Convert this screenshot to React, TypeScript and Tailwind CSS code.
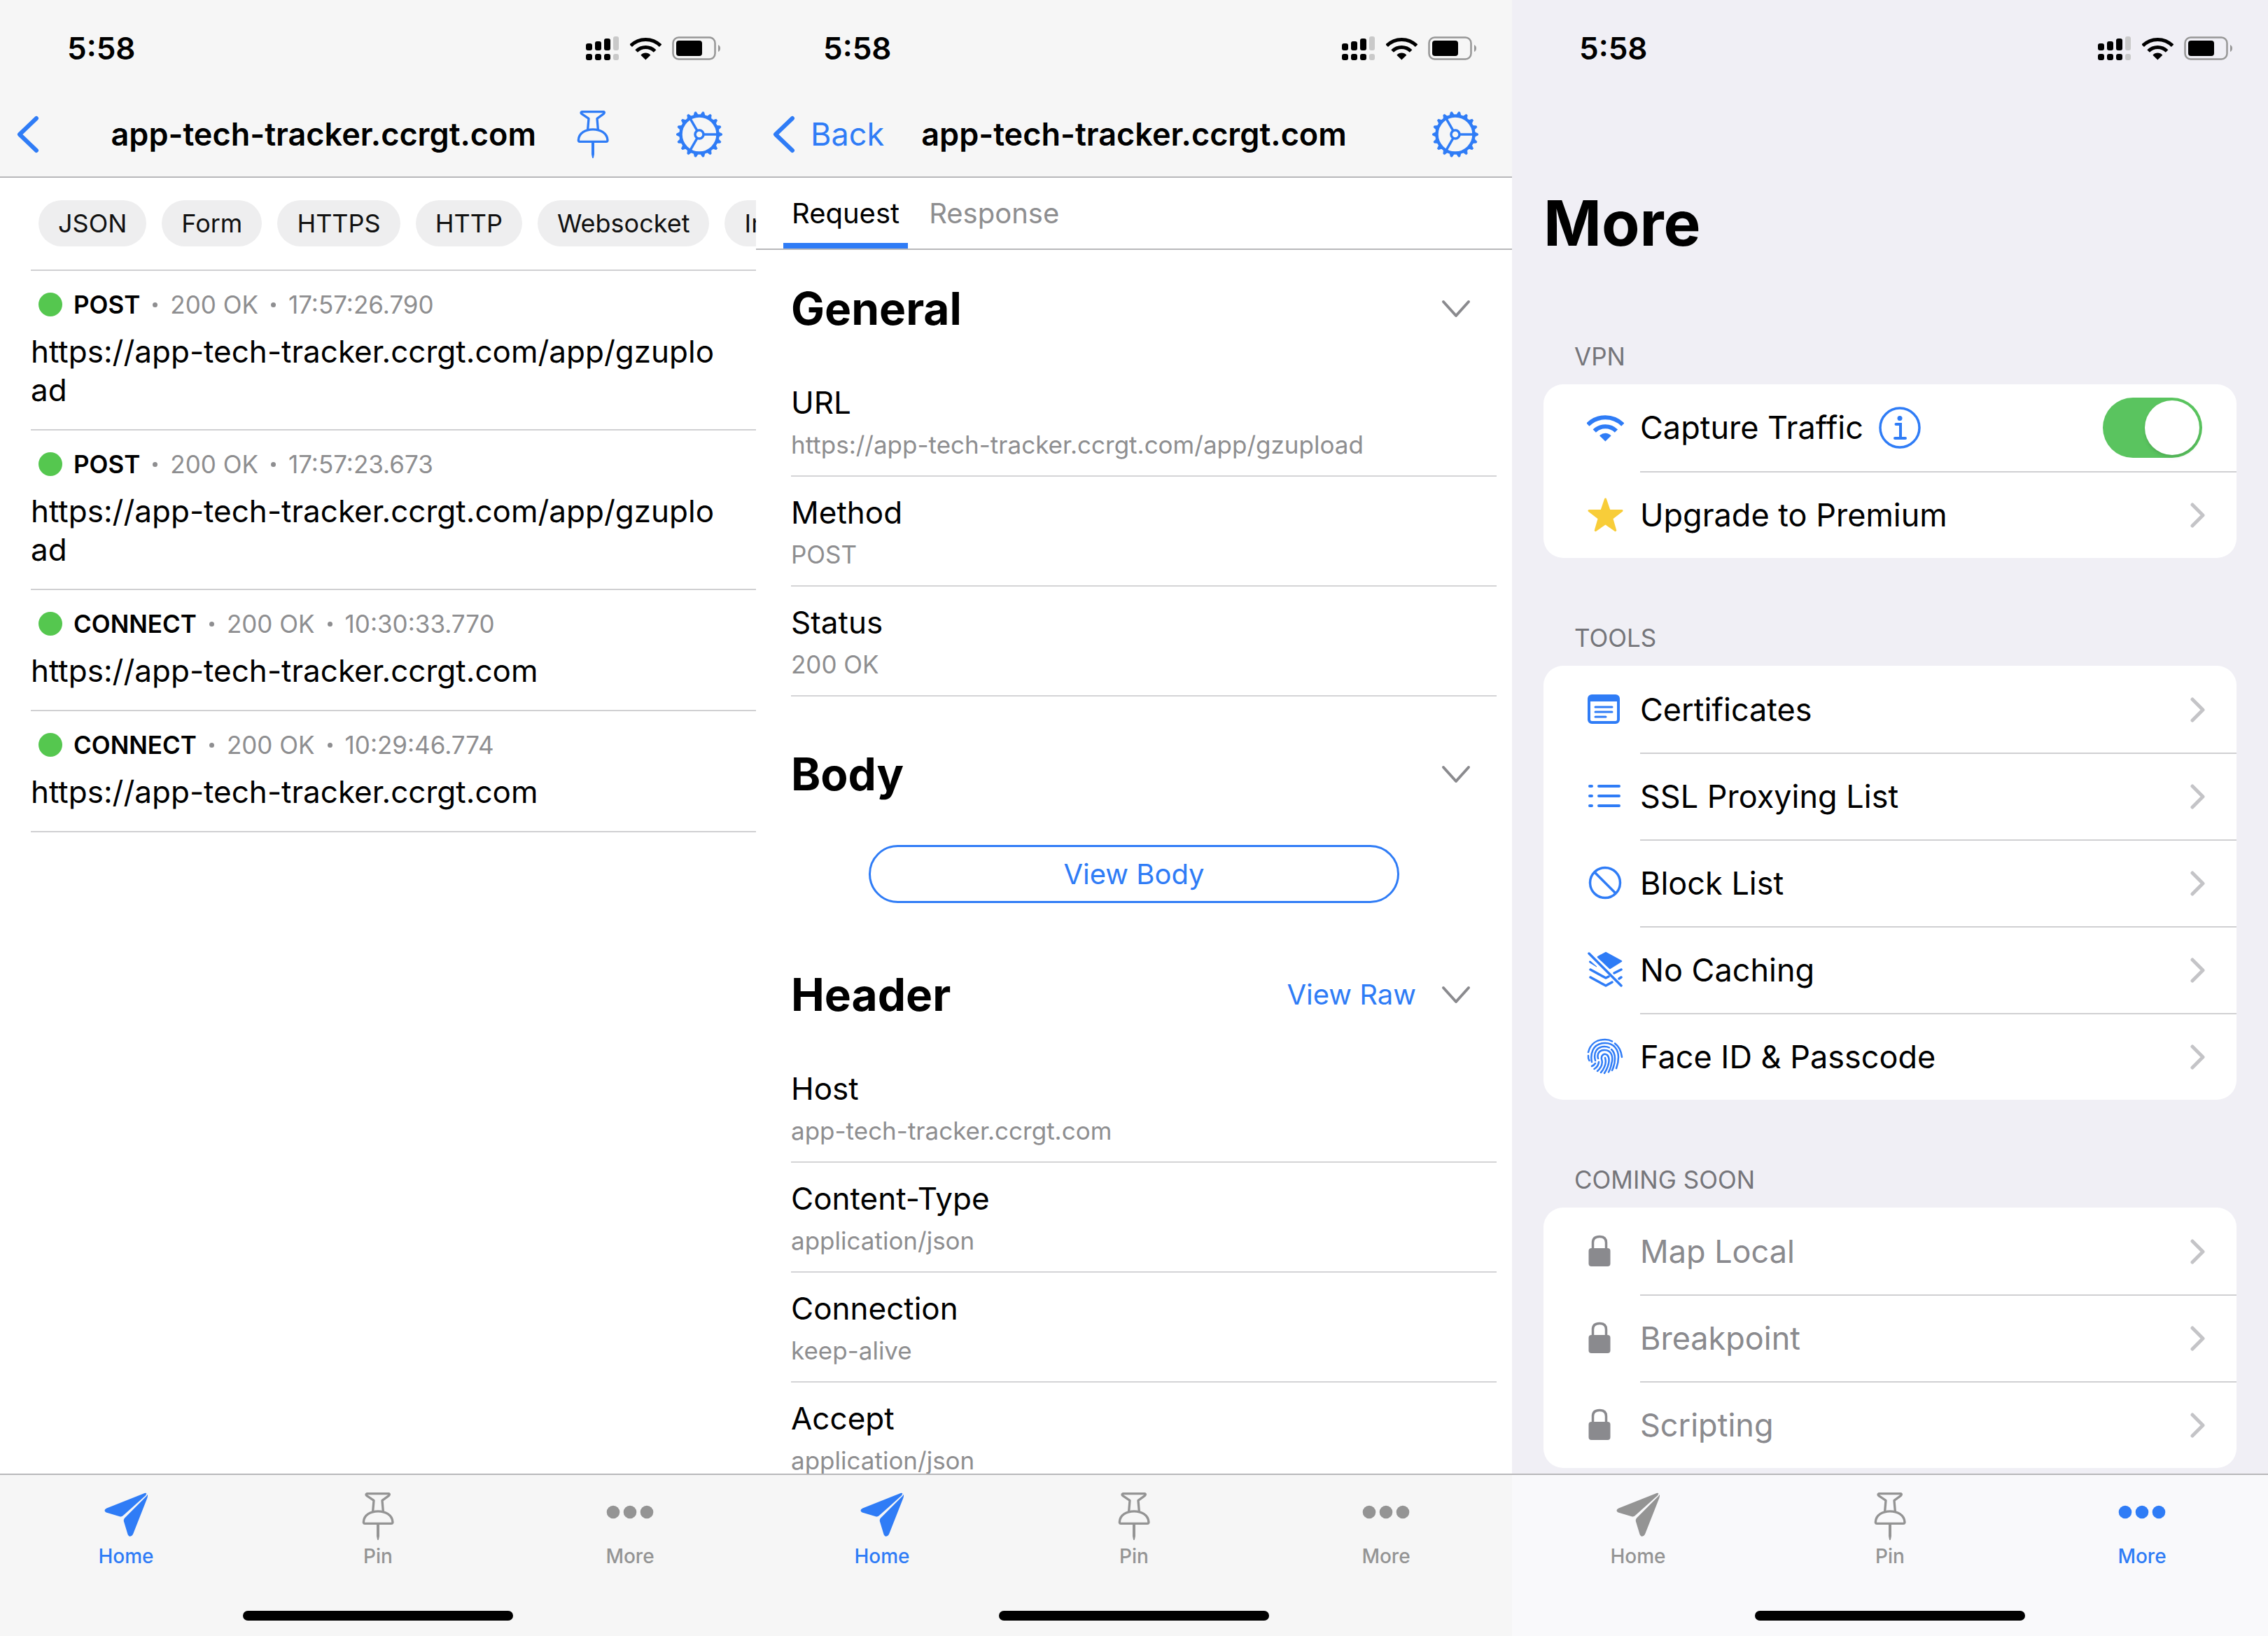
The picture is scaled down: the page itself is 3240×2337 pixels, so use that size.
import React from "react";

/* ---------- Icons ---------- */

const WifiShape = ({ className }: { className: string }) => (
  <svg viewBox="74 68 158 118" className={className} fill="none" stroke="currentColor" strokeWidth="18" aria-hidden="true">
    <path d="M78 114 A105 105 0 0 1 227 114" />
    <path d="M106 141 A66 66 0 0 1 199 141" />
    <path d="M128 161 A33 33 0 0 1 177 161 L152.500 185 Z" fill="currentColor" stroke="none" />
  </svg>
);

const Signal = () => (
  <svg viewBox="0 0 48 36" className="h-9 w-12" aria-hidden="true">
    <g fill="#000">
      <rect x="0" y="11" width="9" height="10" rx="3" />
      <rect x="13" y="8" width="9" height="13" rx="3" />
      <rect x="26" y="4" width="9" height="17" rx="3" />
      <rect x="0" y="26" width="9" height="9" rx="3" />
      <rect x="13" y="26" width="9" height="9" rx="3" />
      <rect x="26" y="26" width="9" height="9" rx="3" />
    </g>
    <g fill="#c9c9c9">
      <rect x="39" y="1" width="8" height="20" rx="3" />
      <rect x="39" y="26" width="8" height="9" rx="3" />
    </g>
  </svg>
);

const Battery = () => (
  <svg viewBox="0 0 70 34" className="h-[34px] w-[70px]" aria-hidden="true">
    <rect x="1.500" y="1.500" width="60" height="31" rx="8" fill="none" stroke="#979797" strokeWidth="2.500" />
    <rect x="6" y="6" width="37" height="22" rx="4" fill="#000" />
    <path d="M66 12 Q69 13.500 69 17 Q69 20.500 66 22 Z" fill="#979797" />
  </svg>
);

const BackChevron = () => (
  <svg viewBox="0 0 32 54" className="h-[54px] w-8" fill="none" stroke="currentColor" strokeWidth="6" strokeLinecap="round" strokeLinejoin="round" aria-hidden="true">
    <path d="M28 4 L4 27 L28 50" />
  </svg>
);

const Pushpin = ({ className }: { className: string }) => (
  <svg viewBox="72 380 136 210" className={className} fill="none" stroke="currentColor" strokeWidth="10" strokeLinejoin="round" strokeLinecap="round" aria-hidden="true">
    <path d="M92 388 H187 Q192 391 186 397 L158 417 L162 464 M92 388 Q86 391 92 397 L122 417 L118 464" />
    <path d="M78 510 C80 448 200 448 203 510 Q203 516 197 516 H84 Q78 516 78 510 Z" />
    <path d="M137 518 H143 L143 570 L140 584 L137 570 Z" fill="currentColor" strokeWidth="6" />
  </svg>
);

const TEETH = Array.from({ length: 18 }, (_, i) => i * 20);

const Gear = () => (
  <svg viewBox="-34 -34 68 68" className="size-[68px]" fill="none" stroke="currentColor" aria-hidden="true">
    <circle r="26.500" strokeWidth="4.500" />
    <circle r="6" strokeWidth="3.500" />
    {TEETH.map((a) => (
      <path key={a} d="M27 -3.500 L32.500 -1 V1 L27 3.500 Z" fill="currentColor" strokeWidth="0.800" transform={`rotate(${a})`} />
    ))}
    {[0, 120, 240].map((a) => (
      <path key={a} d="M7 0 H26" strokeWidth="3.500" transform={`rotate(${a})`} />
    ))}
  </svg>
);

const DownChevron = () => (
  <svg viewBox="0 0 42 26" className="h-[26px] w-[42px]" fill="none" stroke="#8a8a8e" strokeWidth="4" strokeLinecap="round" strokeLinejoin="round" aria-hidden="true">
    <path d="M3 3 L21 23 L39 3" />
  </svg>
);

const RightChevron = () => (
  <svg viewBox="0 0 22 36" className="h-9 w-[22px]" fill="none" stroke="#c4c4c7" strokeWidth="5" strokeLinecap="round" strokeLinejoin="round" aria-hidden="true">
    <path d="M3 3 L18 18 L3 33" />
  </svg>
);

const Plane = () => (
  <svg viewBox="82 68 188 188" className="size-[63px]" fill="currentColor" aria-hidden="true">
    <path d="M262 71 Q256 69 248 73 L92 135 Q76 144 90 153 L150 171 Q158 172 163 166 L259 80 Z" />
    <path d="M267 76 Q268 84 265 92 L206 242 Q201 255 192 255 Q184 254 181 243 L165 190 Q164 184 168 178 L263 82 Z" />
  </svg>
);

const Dots = () => (
  <svg viewBox="0 0 68 20" className="h-5 w-[68px]" fill="currentColor" aria-hidden="true">
    <circle cx="10" cy="10" r="9.300" />
    <circle cx="34" cy="10" r="9.300" />
    <circle cx="58" cy="10" r="9.300" />
  </svg>
);

const Star = () => (
  <svg viewBox="82 418 154 148" className="h-[49px] w-[51px]" fill="#f8cd39" stroke="#f8cd39" strokeWidth="9" strokeLinejoin="round" aria-hidden="true">
    <path d="M159 424 L176 474 H230 L187 507 L202 559 L159 529 L116 559 L131 507 L88 474 H142 Z" />
  </svg>
);

const Certificate = () => (
  <svg viewBox="0 0 50 42" className="h-[42px] w-[50px]" fill="none" stroke="currentColor" aria-hidden="true">
    <rect x="2" y="2" width="42" height="38" rx="4" strokeWidth="4" />
    <path d="M2 3 H44 V10 H2 Z" fill="currentColor" stroke="none" />
    <path d="M11 18 H35 M11 25 H35 M11 32 H26" strokeWidth="3" strokeLinecap="round" />
  </svg>
);

const Bullets = () => (
  <svg viewBox="0 0 50 34" className="h-[34px] w-[50px]" fill="none" stroke="currentColor" strokeWidth="4" strokeLinecap="round" aria-hidden="true">
    <path d="M3 3 H6 M16 3 H45 M3 17 H6 M16 17 H45 M3 31 H6 M16 31 H45" />
  </svg>
);

const Block = () => (
  <svg viewBox="0 0 48 48" className="size-12" fill="none" stroke="currentColor" strokeWidth="3.500" aria-hidden="true">
    <circle cx="24" cy="24" r="21.500" />
    <path d="M9 9 L39 39" />
  </svg>
);

const NoCache = () => (
  <svg viewBox="0 0 50 52" className="h-[52px] w-[50px]" fill="none" stroke="currentColor" strokeWidth="3.500" strokeLinejoin="round" strokeLinecap="round" aria-hidden="true">
    <path d="M15 8 L26 2 L48 14 L32 24 Z" fill="currentColor" strokeWidth="2.500" />
    <path d="M2 3 L48 49" />
    <path d="M3 14 L4 14 L13 22 L3 16 Z" fill="currentColor" strokeWidth="1" />
    <path d="M4 26 L26 38 L30 36" />
    <path d="M38 31 L48 26" />
    <path d="M4 37 L26 49 L35 44" />
    <path d="M45 39 L48 37" />
  </svg>
);

const Fingerprint = () => (
  <svg viewBox="0 0 52 52" className="size-[52px]" fill="none" stroke="currentColor" strokeWidth="2.500" strokeLinecap="round" aria-hidden="true">
    <path d="M2 20 C5 8 14 2 26 2 Q32 2 36 4.500" />
    <path d="M40 7.500 C46 12 49 18 50 27" />
    <path d="M2 25 Q1.500 29 3.500 32" />
    <path d="M7 34 C5 24 7 7 26 7 C39 7 45 17 45 27 Q45 35 42 43" />
    <path d="M12 32 C9 21 14 12 25 12 Q29 12 32 13.500" />
    <path d="M35 16 C42 22 41 36 36 46" />
    <path d="M7 40 Q10 39 12 36" />
    <path d="M16 29 C14 22 18 17 25 17 C36 17 38 28 35 37 Q34 43 31 48.500" />
    <path d="M10.500 44 Q16 41 17 34" />
    <path d="M15 47 Q24 39 21 30 C20 24 25 21 29 24 C34 29 31 41 25 50" />
    <path d="M26 28 Q28 35 25 41 Q23 46 20 49" />
  </svg>
);

const Lock = () => (
  <svg viewBox="0 0 32 46" className="h-[46px] w-8" aria-hidden="true">
    <path d="M6.500 22 V11 Q6.500 2.500 16 2.500 Q25.500 2.500 25.500 11 V22" fill="none" stroke="#8a8a8e" strokeWidth="3.500" />
    <rect x="0.500" y="19" width="31" height="26" rx="4" fill="#8a8a8e" />
  </svg>
);

const Info = () => (
  <svg viewBox="0 0 60 60" className="size-[60px]" fill="none" stroke="currentColor" aria-hidden="true">
    <circle cx="30" cy="30" r="28" strokeWidth="3.500" />
    <circle cx="30" cy="16.500" r="3.500" fill="currentColor" stroke="none" />
    <path d="M24.500 25 H31 V44 M23 45 H38" strokeWidth="4" strokeLinecap="round" />
  </svg>
);

/* ---------- Shared chrome ---------- */

const StatusBar = () => (
  <div className="flex h-[138px] shrink-0 items-center justify-between pr-[50px] pl-24">
    <span className="text-[44px] leading-[56px] font-semibold">5:58</span>
    <div className="flex items-center gap-[15px]">
      <Signal />
      <WifiShape className="h-[34px] w-[45px]" />
      <Battery />
    </div>
  </div>
);

type TabName = "Home" | "Pin" | "More";

const TabBar = ({ active, tone }: { active: TabName; tone: string }) => {
  const tabs: { name: TabName; icon: React.ReactNode }[] = [
    { name: "Home", icon: <Plane /> },
    { name: "Pin", icon: <Pushpin className="h-[70px] w-[46px]" /> },
    { name: "More", icon: <Dots /> },
  ];
  return (
    <nav className={`flex h-[232px] shrink-0 flex-col border-t-2 border-[#b8b8ba] ${tone}`}>
      <div className="grid grid-cols-3">
        {tabs.map((t) => (
          <button
            key={t.name}
            type="button"
            aria-current={t.name === active ? "page" : undefined}
            className={`flex flex-col items-center pt-5 text-[28px] leading-9 font-medium ${t.name === active ? "text-[#2f7cf6]" : "text-[#949494]"}`}
          >
            <span className="flex h-[78px] items-center">
              <span className={t.name === "More" ? "pb-3" : t.name === "Home" ? "pb-1.5" : ""}>{t.icon}</span>
            </span>
            {t.name}
          </button>
        ))}
      </div>
      <div className="mt-auto mb-[22px] h-3.5 w-[386px] self-center rounded-full bg-black" />
    </nav>
  );
};

/* ---------- Screen 1: request list ---------- */

const CHIPS = ["JSON", "Form", "HTTPS", "HTTP", "Websocket", "Image"];

const REQUESTS = [
  { method: "POST", time: "17:57:26.790", url: "https://app-tech-tracker.ccrgt.com/app/gzupload" },
  { method: "POST", time: "17:57:23.673", url: "https://app-tech-tracker.ccrgt.com/app/gzupload" },
  { method: "CONNECT", time: "10:30:33.770", url: "https://app-tech-tracker.ccrgt.com" },
  { method: "CONNECT", time: "10:29:46.774", url: "https://app-tech-tracker.ccrgt.com" },
];

const RequestList = () => (
  <section className="flex min-h-0 min-w-0 flex-col overflow-hidden bg-white">
    <header className="shrink-0 border-b-2 border-[#b8b8ba] bg-[#f6f6f6] pb-1.5">
      <StatusBar />
      <div className="flex h-[108px] items-center justify-between pr-[47px] pl-6">
        <button type="button" aria-label="Back" className="text-[#2f7cf6]">
          <BackChevron />
        </button>
        <h1 className="ml-auto text-[45px] leading-[54px] font-semibold">app-tech-tracker.ccrgt.com</h1>
        <button type="button" aria-label="Pin" className="ml-[58px] text-[#2f7cf6]">
          <Pushpin className="h-[70px] w-[46px]" />
        </button>
        <button type="button" aria-label="Settings" className="ml-[95px] text-[#2f7cf6]">
          <Gear />
        </button>
      </div>
    </header>
    <main className="min-h-0 flex-1 overflow-hidden">
      <div className="flex gap-[22px] overflow-hidden pt-8 pb-[33px] pl-[55px]">
        {CHIPS.map((c) => (
          <button key={c} type="button" className="h-[66px] shrink-0 rounded-full bg-[#eeeeef] px-7 text-[36px] leading-[66px] text-[#111]">
            {c}
          </button>
        ))}
      </div>
      <ul className="ml-11 border-b-2 border-[#d0d0d2]">
        {REQUESTS.map((r) => (
          <li key={r.time} className="border-t-2 border-[#d0d0d2] pt-6 pr-10 pb-7">
            <div className="flex items-center pl-[11px] text-[35px] leading-[48px] text-[#8e8e90]">
              <span className="mr-4 size-[34px] rounded-full bg-[#55c74f]" />
              <span className="font-semibold text-black">{r.method}</span>
              <span className="mx-[18px] size-[7px] rounded-full bg-[#8e8e90]" />
              <span>200 OK</span>
              <span className="mx-[18px] size-[7px] rounded-full bg-[#8e8e90]" />
              <span>{r.time}</span>
            </div>
            <p className="pt-4 text-[44px] leading-[55px] break-all">{r.url}</p>
          </li>
        ))}
      </ul>
    </main>
    <TabBar active="Home" tone="bg-[#f6f6f6]" />
  </section>
);

/* ---------- Screen 2: request detail ---------- */

const Field = ({ label, value }: { label: string; value: string }) => (
  <div className="border-b-2 border-[#d4d4d6] pt-[23px] pb-5">
    <dt className="text-[44px] leading-[56px]">{label}</dt>
    <dd className="pt-2 text-[35px] leading-[48px] text-[#8e8e90]">{value}</dd>
  </div>
);

const SectionTitle = ({ title, pad, action }: { title: string; pad: string; action?: string }) => (
  <div className={`flex items-center pr-[37px] pb-[43px] ${pad}`}>
    <h2 className="mr-auto text-[64px] leading-[80px] font-bold">{title}</h2>
    {action && (
      <button type="button" className="mr-9 text-[40px] leading-[48px] text-[#2f7cf6]">
        {action}
      </button>
    )}
    <button type="button" aria-label={`Collapse ${title}`}>
      <DownChevron />
    </button>
  </div>
);

const RequestDetail = () => (
  <section className="flex min-h-0 min-w-0 flex-col overflow-hidden bg-white">
    <header className="shrink-0 border-b-2 border-[#b8b8ba] bg-[#f6f6f6] pb-1.5">
      <StatusBar />
      <div className="grid h-[108px] grid-cols-[1fr_auto_1fr] items-center px-6">
        <button type="button" className="flex items-center gap-[22px] text-[45px] leading-[54px] text-[#2f7cf6]">
          <BackChevron />
          Back
        </button>
        <h1 className="text-[45px] leading-[54px] font-semibold">app-tech-tracker.ccrgt.com</h1>
        <button type="button" aria-label="Settings" className="mr-[23px] justify-self-end text-[#2f7cf6]">
          <Gear />
        </button>
      </div>
    </header>
    <div role="tablist" className="flex shrink-0 gap-[18px] border-b-2 border-[#b8b8ba] pl-[39px] text-[40px] leading-[48px]">
      <button type="button" role="tab" aria-selected="true" className="border-b-8 border-[#2f7cf6] px-3 pt-[27px] pb-[18px]">
        Request
      </button>
      <button type="button" role="tab" aria-selected="false" className="border-b-8 border-transparent px-3 pt-[27px] pb-[18px] text-[#8e8e90]">
        Response
      </button>
    </div>
    <main className="min-h-0 flex-1 overflow-hidden pr-[22px] pl-[50px]">
      <SectionTitle title="General" pad="pt-11" />
      <dl>
        <Field label="URL" value="https://app-tech-tracker.ccrgt.com/app/gzupload" />
        <Field label="Method" value="POST" />
        <Field label="Status" value="200 OK" />
      </dl>
      <SectionTitle title="Body" pad="pt-[71px]" />
      <div className="pt-[18px] pr-[139px] pb-[21px] pl-[111px]">
        <button type="button" className="h-[83px] w-full rounded-full border-3 border-[#2f7cf6] text-[40px] leading-[48px] text-[#2f7cf6]">
          View Body
        </button>
      </div>
      <SectionTitle title="Header" pad="pt-[70px]" action="View Raw" />
      <dl>
        <Field label="Host" value="app-tech-tracker.ccrgt.com" />
        <Field label="Content-Type" value="application/json" />
        <Field label="Connection" value="keep-alive" />
        <Field label="Accept" value="application/json" />
      </dl>
    </main>
    <TabBar active="Home" tone="bg-[#f6f6f6]" />
  </section>
);

/* ---------- Screen 3: more ---------- */

const Group = ({ title, children }: { title: string; children: React.ReactNode }) => (
  <section>
    <h2 className="pb-[18px] pl-11 text-[35px] leading-[44px] text-[#75757a]">{title}</h2>
    <ul className="overflow-hidden rounded-[28px] bg-white">{children}</ul>
  </section>
);

const IconSlot = ({ children, muted }: { children: React.ReactNode; muted?: boolean }) => (
  <span className={`mr-[22px] flex w-14 shrink-0 items-center text-[#2f7cf6] ${muted ? "pl-1" : "justify-center"}`}>{children}</span>
);

const Row = ({ icon, label, first, muted }: { icon: React.ReactNode; label: string; first?: boolean; muted?: boolean }) => (
  <li>
    <button type="button" className={`flex h-[124px] w-full items-center pl-[60px] text-left text-[45px] leading-[56px] ${muted ? "text-[#8a8a8e]" : "text-black"}`}>
      <IconSlot muted={muted}>{icon}</IconSlot>
      <span className={`flex h-full flex-1 items-center justify-between border-t-2 pr-11 ${first ? "border-transparent" : "border-[#d0d0d2]"}`}>
        {label}
        <RightChevron />
      </span>
    </button>
  </li>
);

const More = () => (
  <section className="flex min-h-0 min-w-0 flex-col overflow-hidden bg-[#f0eff5]">
    <StatusBar />
    <main className="flex min-h-0 flex-1 flex-col gap-[92px] overflow-hidden px-[45px] pt-[125px]">
      <h1 className="pb-5 text-[89px] leading-[112px] font-bold">More</h1>
      <Group title="VPN">
        <li className="flex h-[124px] items-center pl-[60px]">
          <IconSlot>
            <WifiShape className="h-10 w-[53px]" />
          </IconSlot>
          <label htmlFor="capture" className="text-[45px] leading-[56px]">
            Capture Traffic
          </label>
          <button type="button" aria-label="About capturing traffic" className="ml-[22px] text-[#2f7cf6]">
            <Info />
          </button>
          <input
            id="capture"
            type="checkbox"
            role="switch"
            defaultChecked
            className="mr-[49px] ml-auto h-[86px] w-[142px] appearance-none rounded-full bg-[#e9e9ea] p-1 before:block before:size-[78px] before:rounded-full before:bg-white before:shadow-md checked:bg-[#5ac45f] checked:pl-[60px]"
          />
        </li>
        <Row icon={<Star />} label="Upgrade to Premium" />
      </Group>
      <Group title="TOOLS">
        <Row first icon={<Certificate />} label="Certificates" />
        <Row icon={<Bullets />} label="SSL Proxying List" />
        <Row icon={<Block />} label="Block List" />
        <Row icon={<NoCache />} label="No Caching" />
        <Row icon={<Fingerprint />} label="Face ID & Passcode" />
      </Group>
      <Group title="COMING SOON">
        <Row first muted icon={<Lock />} label="Map Local" />
        <Row muted icon={<Lock />} label="Breakpoint" />
        <Row muted icon={<Lock />} label="Scripting" />
      </Group>
    </main>
    <TabBar active="More" tone="bg-[#f9f9fb]" />
  </section>
);

export default function App() {
  return (
    <div className="grid h-screen grid-cols-3 grid-rows-1 overflow-hidden font-['Inter',sans-serif] text-black">
      <RequestList />
      <RequestDetail />
      <More />
    </div>
  );
}
